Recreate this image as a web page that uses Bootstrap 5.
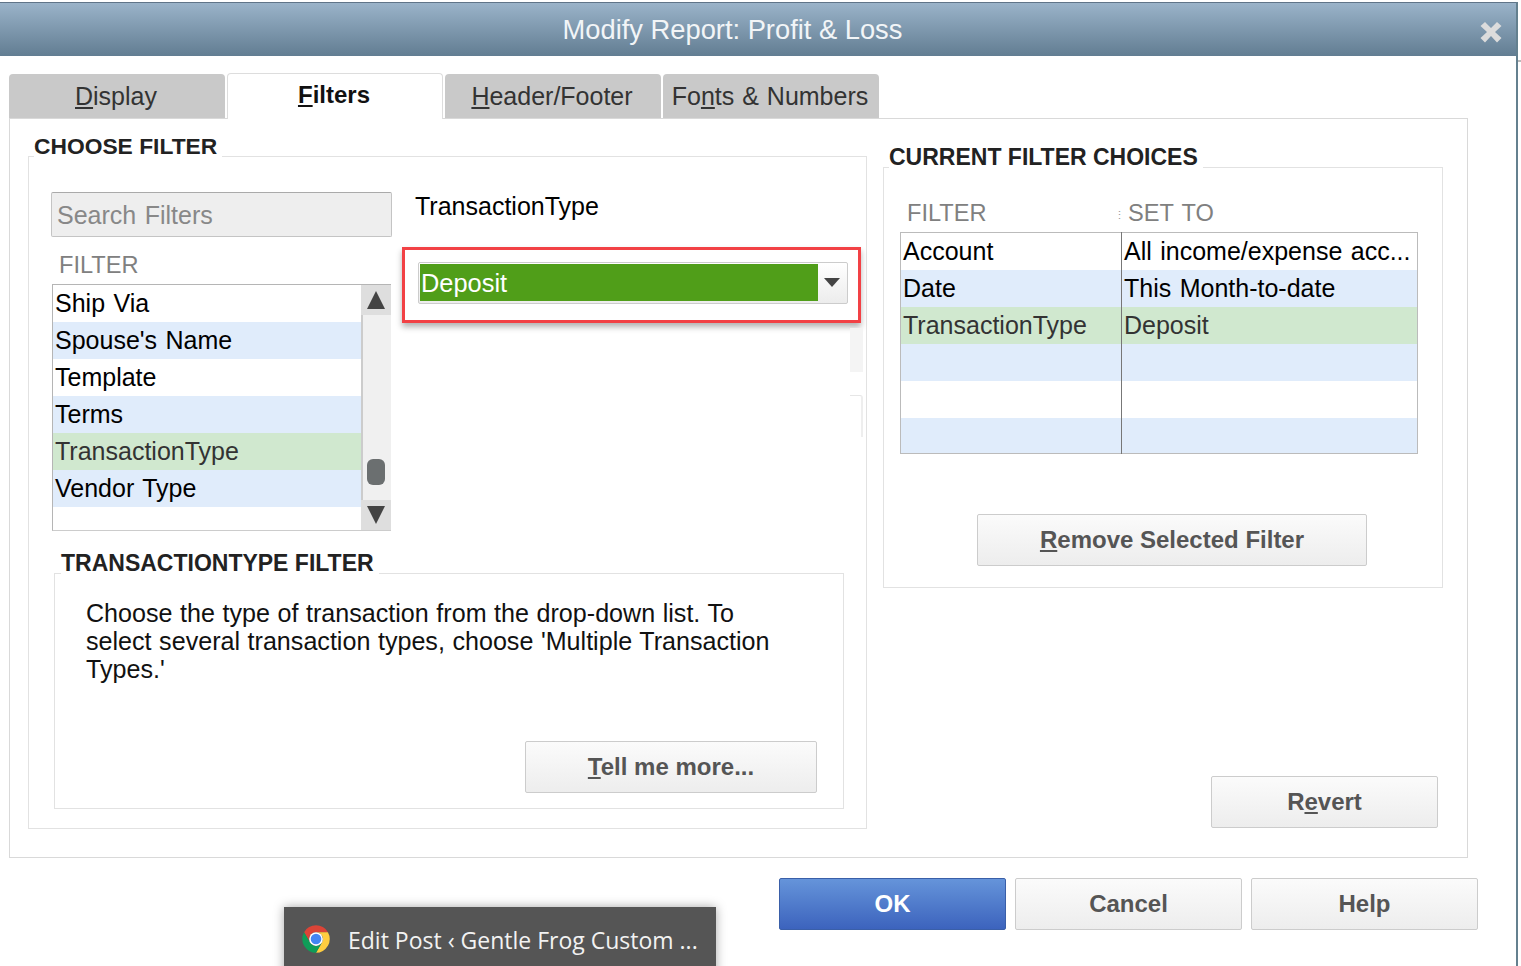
<!DOCTYPE html>
<html lang="en">
<head>
<meta charset="utf-8">
<title>Modify Report: Profit &amp; Loss</title>
<link href="https://cdn.jsdelivr.net/npm/bootstrap@5.3.0/dist/css/bootstrap.min.css" rel="stylesheet">
<style>
html,body{height:966px;overflow:hidden;background:#fff}
body{font-family:"Liberation Sans",Arial,sans-serif;font-size:25px;color:#000;line-height:28px}
.win{position:relative;width:1518px;height:964px;margin-top:2px;border-right:2px solid #64808f;overflow:hidden}
.titlebar{height:54px;margin-right:-1px;border-top:1px solid #5f7488;background:linear-gradient(#9ab3c9,#627d92);color:#f2f5f7;font-size:27.3px;padding:1px 52px 0 0}
.closex{position:absolute;left:1479px;top:18px}
.dlg-tabs{padding-left:9px;margin-top:18px;gap:2px;height:44px;position:relative;z-index:1}
.dlg-tabs .nav-link{width:216px;height:44px;padding:8px 2px 0 0;text-align:center;background:#c9c9c9;color:#333;border-radius:4px 4px 0 0;font-size:25px;line-height:28px;word-spacing:1px}
.dlg-tabs .nav-link.active{height:46px;margin-top:-1px;background:#fff;color:#111;font-weight:700;font-size:24px;border:1px solid #ddd;border-bottom:0;padding:7px 2px 0 0}
.mainpanel{width:1459px;height:740px;margin-left:9px;border:1px solid #d9d9d9;padding:13px 0 0 18px;gap:16px}
fieldset.grp{border:1px solid #e2e2e2;padding:0;min-width:0}
fieldset.grp>legend{float:none;width:auto;margin:0 0 0 5px;padding:0 5px 20px 0;font-size:23px;line-height:28px;font-weight:700;color:#222}
.leftgrp{width:839px;height:697px;padding:0 0 0 22px!important}
fieldset.leftgrp>legend{margin-left:-17px;font-size:22.8px}
fieldset.subgrp>legend{margin-left:6px}
.searchbox{width:341px;height:45px;padding:8px 0 0 5px;background:#eee;border:1px solid #c4c4c4;border-top-color:#aaa;border-radius:2px;color:#888;word-spacing:1.5px}
.colhead{color:#808080;line-height:28px;font-size:23.6px}
.listwrap{width:339px;height:247px;margin:5px 0 0 1px;border:1px solid #b5b5b5;border-right:0;border-bottom-color:#ccc}
.listrows{width:308px}
.lrow{height:37px;line-height:37px;padding-left:2px;white-space:nowrap;word-spacing:1.500px}
.bluerow{background:#e0ecfb}
.greenrow{background:#d0e8cf;color:#333}
.sbar{width:30px;background:#f0f0f0}
.strack{border-left:2px solid #ccc}
.sbtn{height:30px;background:#dedede;flex:none}
.sthumb{width:18px;height:26px;background:#6b6f70;border-radius:6px;margin:0 0 15px 4px}
.seltitle{padding-left:13px;height:28px}
.redbox{width:459px;height:76px;margin-top:27px;border:3px solid #f24145;box-shadow:0 4px 6px rgba(0,0,0,.3);padding:12px 10px 0 13px;background:#fff}
.selectbox{height:42px;border:1px solid #ccc;border-radius:2px;padding:1px;background:linear-gradient(#fff,#ececec)}
.selfill{width:398px;height:37px;background:#509e19;color:#fff;line-height:39px;padding-left:1px;font-size:25.4px}
.ghosttop{width:13px;height:44px;margin:5px -3px 0 auto;background:#f4f4f4}
.ghostbot{width:13px;height:42px;margin:23px -3px 0 auto;border-top:1px solid #e6e6e6;border-right:2px solid #eee;border-radius:0 3px 0 0}
.subgrp{width:790px;height:260px;margin:18px 0 0 3px}
.desc{padding:2px 0 0 31px;width:730px;line-height:28px;font-size:25.1px;word-spacing:.6px;color:#111}
.dlg-btn{height:52px;padding:0;border:1px solid #ccc;border-radius:2px;background:linear-gradient(#fbfbfb,#ededed);color:#555;font-weight:700;font-size:24px;line-height:50px;font-family:inherit}
.morebtn{width:292px;margin:auto 26px 15px auto}
.rightcol{width:560px;height:697px}
.rightgrp{width:560px;height:445px;margin-top:11px}
.gridheads{margin:8px 0 5px 23px}
.gridheads .h2col{position:relative;margin-left:99px;word-spacing:2px}
.gridheads .h1col{width:108px}
.dots{color:#999;font-size:11px;letter-spacing:0;margin-right:9px;line-height:6px;width:5px;display:inline-block;vertical-align:middle}
.gridtbl{width:518px;margin-left:16px;table-layout:fixed;border:1px solid #bbb}
.gridtbl td{height:37px;padding:0 0 0 2px;line-height:37px;white-space:nowrap;overflow:hidden;word-spacing:1.500px}
.gridtbl td:first-child{width:221px;border-right:1px solid #777}
.gridtbl tr:last-child td{height:35px}
.removebtn{width:390px;margin:60px 0 0 93px}
.revertbtn{width:227px;margin:auto 5px 1px auto}
.bottombar{margin-top:20px;padding-right:38px;gap:9px}
.bottombar .dlg-btn{width:227px}
.okbtn{background:linear-gradient(#6594da,#3c63bd);border-color:#3a5fa8;color:#fff}
.taskpeek{position:absolute;left:284px;top:905px;width:432px;height:70px;background:#555;color:#f2f2f2;box-shadow:0 0 10px rgba(0,0,0,.35);font-family:"Open Sans",sans-serif;font-size:23px;padding:12px 0 0 17px;gap:17px;white-space:nowrap}
.taskpeek span{margin-top:7px}
.strip{position:absolute;left:1518px;top:60px;width:3px;height:2px;background:#bbb}
</style>
</head>
<body>
<div class="win">
  <div class="titlebar d-flex align-items-center justify-content-center">Modify Report: Profit &amp; Loss</div>
  <svg class="closex" width="24" height="24" viewBox="0 0 24 24"><path d="M6 2 12 8 18 2 22.5 6 16 12 22.5 18 18 22.5 12 16 6 22.5 1.500 18 8 12 1.500 6Z" fill="#dcdcdc"/></svg>

  <ul class="nav dlg-tabs">
    <li class="nav-item"><a class="nav-link" href="#"><u>D</u>isplay</a></li>
    <li class="nav-item"><a class="nav-link active" href="#"><u>F</u>ilters</a></li>
    <li class="nav-item"><a class="nav-link" href="#"><u>H</u>eader/Footer</a></li>
    <li class="nav-item"><a class="nav-link" href="#">Fo<u>n</u>ts &amp; Numbers</a></li>
  </ul>

  <div class="mainpanel d-flex">
    <fieldset class="grp leftgrp">
      <legend>CHOOSE FILTER</legend>
      <div class="d-flex" style="margin-top:12px">
        <div>
          <div class="searchbox">Search Filters</div>
          <div class="colhead" style="margin:14px 0 0 8px">FILTER</div>
          <div class="listwrap d-flex">
            <div class="listrows">
              <div class="lrow">Ship Via</div>
              <div class="lrow bluerow">Spouse's Name</div>
              <div class="lrow">Template</div>
              <div class="lrow bluerow">Terms</div>
              <div class="lrow greenrow">TransactionType</div>
              <div class="lrow bluerow">Vendor Type</div>
            </div>
            <div class="sbar d-flex flex-column">
              <div class="sbtn d-flex align-items-center justify-content-center"><svg width="20" height="20" viewBox="0 0 20 20"><path d="M10 1 19 19H1Z" fill="#444"/></svg></div>
              <div class="strack flex-grow-1 d-flex align-items-end"><div class="sthumb"></div></div>
              <div class="sbtn d-flex align-items-center justify-content-center"><svg width="20" height="20" viewBox="0 0 20 20"><path d="M10 19 19 1H1Z" fill="#444"/></svg></div>
            </div>
          </div>
        </div>
        <div style="margin-left:10px;width:458px">
          <div class="seltitle">TransactionType</div>
          <div class="redbox">
            <div class="selectbox d-flex">
              <div class="selfill">Deposit</div>
              <div class="flex-grow-1 d-flex justify-content-center" style="padding-top:14px"><svg width="16" height="9" viewBox="0 0 16 9"><path d="M0 0H16L8 9Z" fill="#444"/></svg></div>
            </div>
          </div>
          <div class="ghosttop"></div>
          <div class="ghostbot"></div>
        </div>
      </div>
      <fieldset class="grp subgrp d-flex flex-column">
        <legend>TRANSACTIONTYPE FILTER</legend>
        <div class="desc">Choose the type of transaction from the drop-down list. To select several transaction types, choose 'Multiple Transaction Types.'</div>
        <button class="btn dlg-btn morebtn" type="button"><u>T</u>ell me more...</button>
      </fieldset>
    </fieldset>

    <div class="rightcol d-flex flex-column">
      <fieldset class="grp rightgrp">
        <legend>CURRENT FILTER CHOICES</legend>
        <div class="gridheads d-flex colhead">
          <div class="h1col">FILTER</div>
          <div class="h2col"><span class="dots">⋮</span>SET TO</div>
        </div>
        <table class="gridtbl">
          <tr><td>Account</td><td>All income/expense acc...</td></tr>
          <tr class="bluerow"><td>Date</td><td>This Month-to-date</td></tr>
          <tr class="greenrow"><td>TransactionType</td><td>Deposit</td></tr>
          <tr class="bluerow"><td></td><td></td></tr>
          <tr><td></td><td></td></tr>
          <tr class="bluerow"><td></td><td></td></tr>
        </table>
        <button class="btn dlg-btn removebtn" type="button"><u>R</u>emove Selected Filter</button>
      </fieldset>
      <button class="btn dlg-btn revertbtn" type="button">R<u>e</u>vert</button>
    </div>
  </div>

  <div class="bottombar d-flex justify-content-end">
    <button class="btn dlg-btn okbtn" type="button">OK</button>
    <button class="btn dlg-btn" type="button">Cancel</button>
    <button class="btn dlg-btn" type="button">Help</button>
  </div>

  <div class="taskpeek d-flex align-items-start">
    <svg width="30" height="30" viewBox="0 0 48 48" style="margin-top:5px"><path d="M4.950 13A22 22 0 0 1 43.050 13H24A11 11 0 0 0 14.470 29.500Z" fill="#db4437"/><path d="M43.050 13A22 22 0 0 1 24 46L33.530 29.500A11 11 0 0 0 24 13Z" fill="#ffcd40"/><path d="M24 46A22 22 0 0 1 4.950 13L14.470 29.500A11 11 0 0 0 33.530 29.500Z" fill="#0f9d58"/><circle cx="24" cy="24" r="11" fill="#fff"/><circle cx="24" cy="24" r="8.500" fill="#4285f4"/></svg>
    <span>Edit Post ‹ Gentle Frog Custom ...</span>
  </div>
</div>
<div class="strip"></div>
<script src="https://cdn.jsdelivr.net/npm/bootstrap@5.3.0/dist/js/bootstrap.bundle.min.js"></script>
</body>
</html>
